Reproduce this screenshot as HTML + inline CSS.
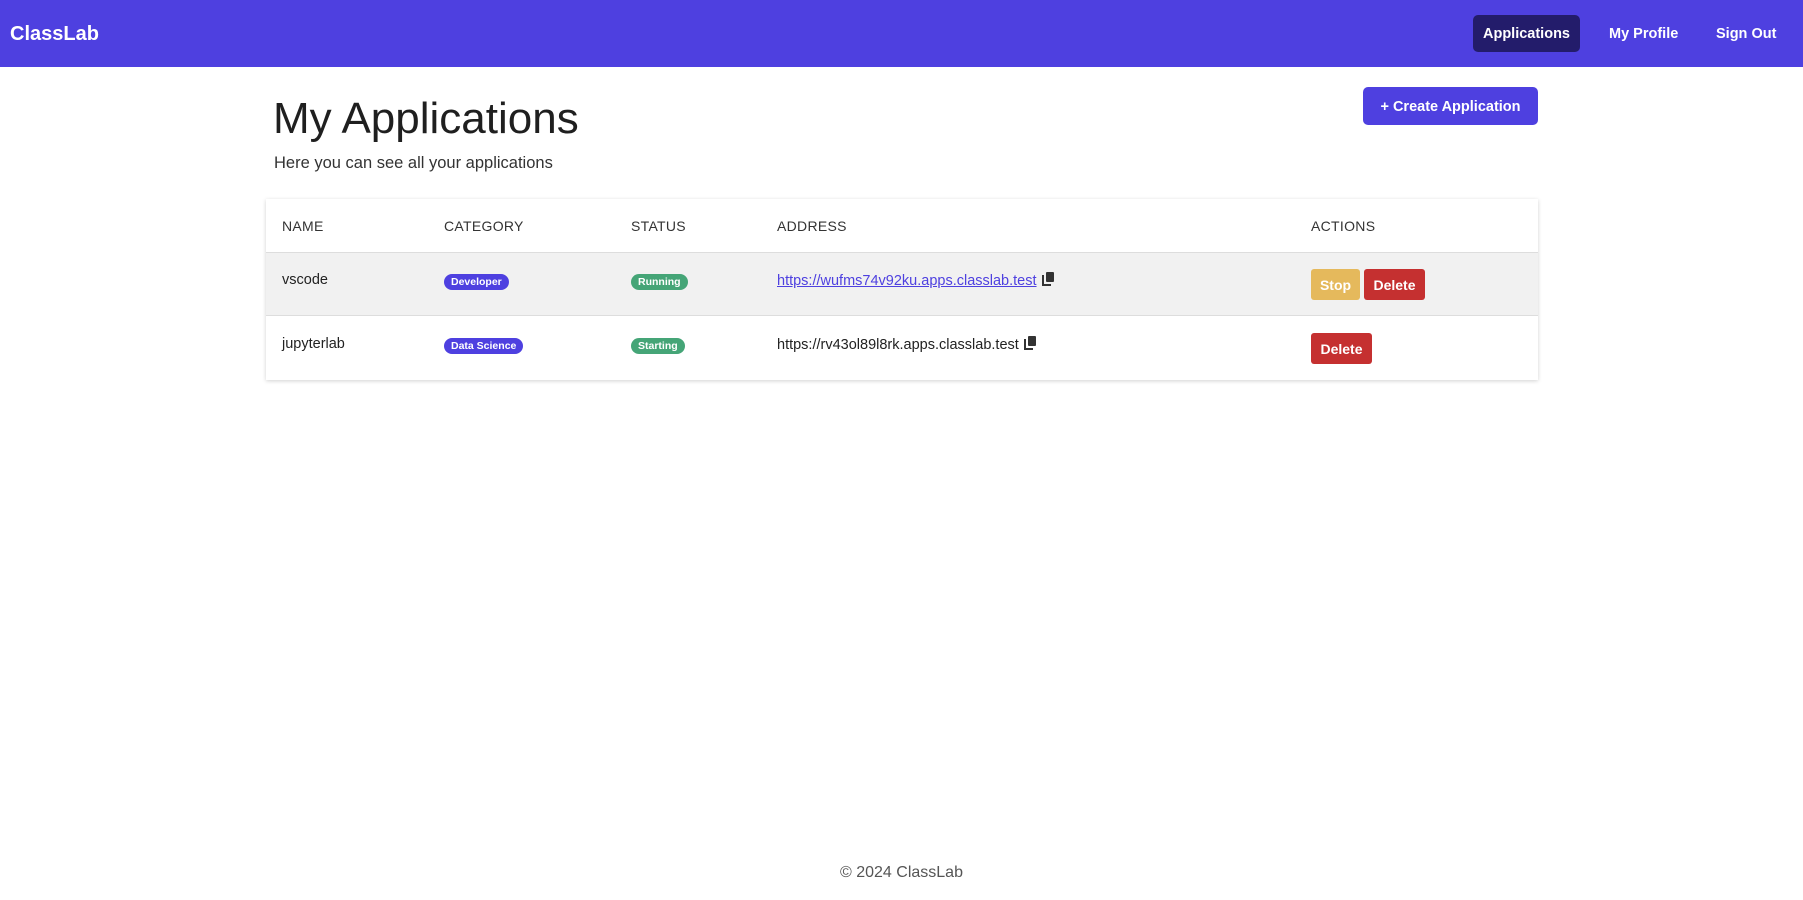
<!DOCTYPE html>
<html><head><meta charset="utf-8"><style>
*{box-sizing:border-box;margin:0;padding:0}
body{width:1803px;height:900px;background:#fff;font-family:"Liberation Sans",sans-serif;color:#222;position:relative;overflow:hidden}
.nav{position:absolute;left:0;top:0;width:1803px;height:67px;background:#4e40e0}
.logo{position:absolute;left:10px;top:23px;font-size:20px;font-weight:bold;color:#fff}
.nl{position:absolute;top:15px;height:37px;line-height:39px;color:#fff;font-size:14.5px;font-weight:bold;padding:0 13px;border-radius:5px}
.abs{position:absolute}
h1{position:absolute;left:273px;top:94px;font-size:44px;font-weight:normal;color:#1f1f1f}
.sub{position:absolute;left:274px;top:154px;font-size:16.5px;color:#333}
.create{position:absolute;left:1363px;top:87px;width:175px;height:38px;background:#4e40e0;color:#fff;border-radius:5px;font-size:14.5px;font-weight:bold;text-align:center;line-height:40px}
.table{position:absolute;left:266px;top:199px;width:1272px;height:181px;box-shadow:0 1px 4px rgba(0,0,0,.18);background:#fff}
.row{position:absolute;left:0;width:1272px}
.th{position:absolute;top:218px;font-size:14px;color:#333;letter-spacing:.3px}
.td{position:absolute;font-size:14.5px;color:#222}
.badge{position:absolute;height:16px;line-height:16px;border-radius:8px;color:#fff;font-size:10.5px;font-weight:bold;padding:0 7px}
.btn{position:absolute;height:31px;line-height:32px;color:#fff;font-size:14px;font-weight:bold;text-align:center;border-radius:3px}
.copy{display:inline-block;vertical-align:-1px;margin-left:5px}
</style></head><body>
<div class="nav">
<div class="logo">ClassLab</div>
<div class="nl" style="left:1473px;width:107px;background:#231c6b;text-align:center;padding:0">Applications</div>
<div class="nl" style="left:1596px">My Profile</div>
<div class="nl" style="left:1703px">Sign Out</div>
</div>
<h1>My Applications</h1>
<div class="sub">Here you can see all your applications</div>
<div class="create">+ Create Application</div>
<div class="table">
<div class="row" style="top:53px;height:64px;background:#f1f1f1;border-top:1px solid #ddd;border-bottom:1px solid #ddd"></div>
</div>
<div class="th" style="left:282px">NAME</div>
<div class="th" style="left:444px">CATEGORY</div>
<div class="th" style="left:631px">STATUS</div>
<div class="th" style="left:777px">ADDRESS</div>
<div class="th" style="left:1311px">ACTIONS</div>

<div class="td" style="left:282px;top:272px">vscode</div>
<div class="badge" style="left:444px;top:274px;background:#4e40e0">Developer</div>
<div class="badge" style="left:631px;top:274px;background:#45a577">Running</div>
<div class="td" style="left:777px;top:272px"><span style="color:#4e40e0;text-decoration:underline">https://wufms74v92ku.apps.classlab.test</span><svg class="copy" width="13" height="14" viewBox="0 0 13 14"><rect x="4" y="0" width="8" height="10" rx="1" fill="#333"/><path d="M1 3v10h8" stroke="#333" stroke-width="2" fill="none"/></svg></div>
<div class="btn" style="left:1311px;top:269px;width:49px;background:#e5b95c">Stop</div>
<div class="btn" style="left:1364px;top:269px;width:61px;background:#c53030">Delete</div>

<div class="td" style="left:282px;top:336px">jupyterlab</div>
<div class="badge" style="left:444px;top:338px;background:#4e40e0">Data Science</div>
<div class="badge" style="left:631px;top:338px;background:#45a577">Starting</div>
<div class="td" style="left:777px;top:336px">https://rv43ol89l8rk.apps.classlab.test<svg class="copy" width="13" height="14" viewBox="0 0 13 14"><rect x="4" y="0" width="8" height="10" rx="1" fill="#333"/><path d="M1 3v10h8" stroke="#333" stroke-width="2" fill="none"/></svg></div>
<div class="btn" style="left:1311px;top:333px;width:61px;background:#c53030">Delete</div>

<div class="abs" style="left:0;width:1803px;top:864px;text-align:center;font-size:16px;color:#555">© 2024 ClassLab</div>
</body></html>
